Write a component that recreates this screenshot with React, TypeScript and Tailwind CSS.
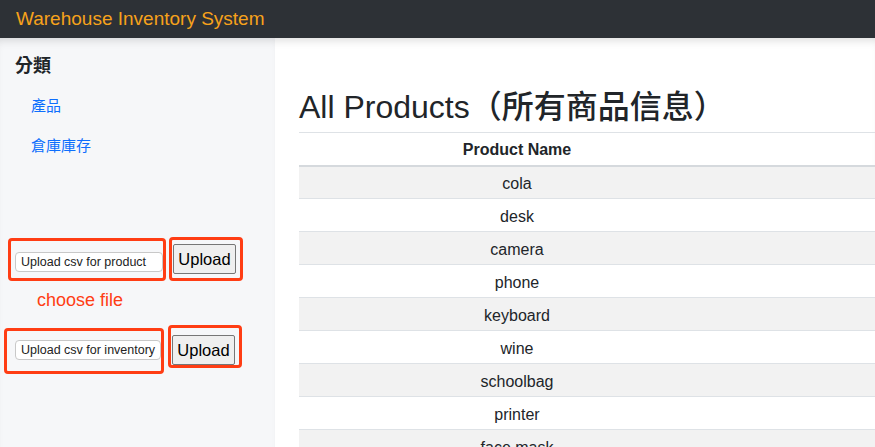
import React from 'react';

const products = ['cola', 'desk', 'camera', 'phone', 'keyboard', 'wine', 'schoolbag', 'printer', 'face mask'];

const UploadRow = ({ label, boxCls, btnCls }: { label: string; boxCls: string; btnCls: string }) => (
  <div className="flex items-start">
    <div className={`rounded-[4px] border-[3px] border-[#ff3d14] flex items-start ${boxCls}`}>
      <div className="w-[148px] h-[20px] rounded-[4px] border border-[#c8c8c8] bg-white px-[5px] text-[12.5px] leading-[18px] text-[#222] whitespace-nowrap overflow-hidden">
        {label}
      </div>
    </div>
    <div className={`rounded-[4px] border-[3px] border-[#ff3d14] flex pl-[1px] ${btnCls}`}>
      <button className="h-[30px] w-[63px] rounded-[2px] border border-[#767676] bg-[#efefef] text-[16.5px] text-black">
        Upload
      </button>
    </div>
  </div>
);

export default function App() {
  return (
    <div className="w-[875px] h-[447px] overflow-hidden bg-white font-['Liberation_Sans','Noto_Sans_CJK_TC',sans-serif]">
      <header className="h-[38px] bg-[#2d3136] flex items-center px-4">
        <span className="text-[#f7a21b] text-[19px]">Warehouse Inventory System</span>
      </header>
      <div className="flex h-[409px] shadow-[inset_0_8px_10px_-6px_rgba(0,0,0,0.15)]">
        <aside className="w-[275px] shrink-0 bg-[#f6f7f9] pt-[15px] shadow-[inset_0_8px_10px_-6px_rgba(0,0,0,0.15)]">
          <h6 className="pl-[15px] text-[18px] font-bold text-[#212529] leading-[26px]">分類</h6>
          <nav className="flex flex-col pl-[31px] mt-[16px] gap-[19px] text-[15px] text-[#0d6efd] leading-[21px]">
            <a>產品</a>
            <a>倉庫庫存</a>
          </nav>
          <div className="mt-[82px] pl-[8px]">
            <UploadRow label="Upload csv for product" boxCls="w-[158px] h-[43px] pl-[4px] pt-[11px]" btnCls="ml-[3px] w-[74px] h-[44px] -mt-[1px] items-center" />
            <p className="pl-[29px] mt-[7px] text-[18px] text-[#ff3d14] leading-[24px]">choose file</p>
            <div className="-ml-[4px] mt-[16px]">
              <UploadRow label="Upload csv for inventory" boxCls="w-[160px] h-[46px] pl-[8px] pt-[9px]" btnCls="ml-[4px] w-[74px] h-[43px] -mt-[3px] items-end" />
            </div>
          </div>
        </aside>
        <main className="flex-1 pl-[24px] pt-[51px]">
          <h1 className="text-[32px] leading-[36px] font-medium text-[#212529] whitespace-nowrap">All Products（所有商品信息）</h1>
          <table className="mt-[7px] w-[700px] border-collapse text-[16px] text-[#212529]">
            <thead>
              <tr className="border-t border-[#dee2e6] border-b-2 border-b-[#d5d9dd]">
                <th className="w-[436px] h-[33px] pt-[2px] font-bold text-center">Product Name</th>
                <th></th>
              </tr>
            </thead>
            <tbody>
              {products.map((p, i) => (
                <tr key={p} className={`border-b border-[#dee2e6] ${i % 2 === 0 ? 'bg-[#f2f2f2]' : 'bg-white'}`}>
                  <td className="h-[33px] pt-[4px] text-center">{p}</td>
                  <td></td>
                </tr>
              ))}
            </tbody>
          </table>
        </main>
      </div>
    </div>
  );
}
